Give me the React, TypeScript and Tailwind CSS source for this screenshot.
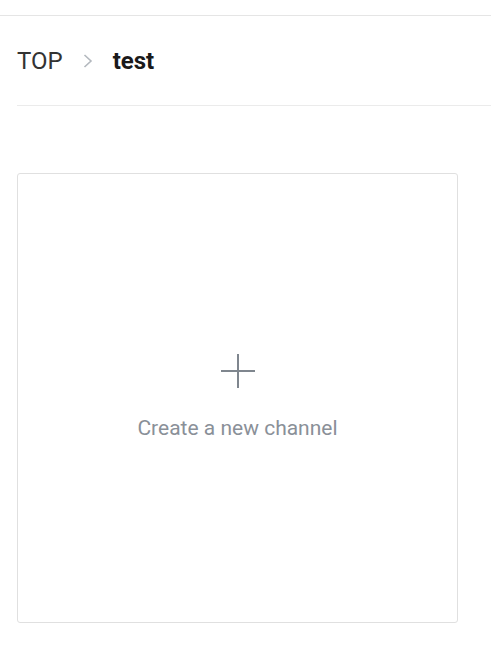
export default function App() {
  return (
    <div className="min-h-screen bg-white font-['Roboto',sans-serif]">
      {/* top bar edge */}
      <div className="h-[16px] border-b border-[#e5e5e5]" />

      {/* Breadcrumb */}
      <div className="ml-[17px] flex h-[90px] items-center border-b border-[#ebebeb]">
        <span className="text-[24px] leading-none text-[#333333]">TOP</span>
        <svg
          className="ml-[20px] mr-[20px]"
          width="10"
          height="14"
          viewBox="0 0 10 14"
          fill="none"
          stroke="#b3b8be"
          strokeWidth="1.6"
        >
          <path d="M1.5 1 L8 7 L1.5 13" />
        </svg>
        <span className="text-[24px] font-bold leading-none text-[#1a1a1a]">test</span>
      </div>

      {/* Card */}
      <div className="ml-[17px] mt-[67px] flex h-[450px] w-[441px] flex-col items-center justify-center rounded-[3px] border border-[#e0e0e0] pb-[3px]">
        <svg width="34" height="34" viewBox="0 0 34 34" stroke="#7f868e" strokeWidth="2">
          <path d="M17 0 V34 M0 17 H34" />
        </svg>
        <span className="mt-[30px] text-[21px] leading-none text-[#8a9098]">Create a new channel</span>
      </div>
    </div>
  )
}
